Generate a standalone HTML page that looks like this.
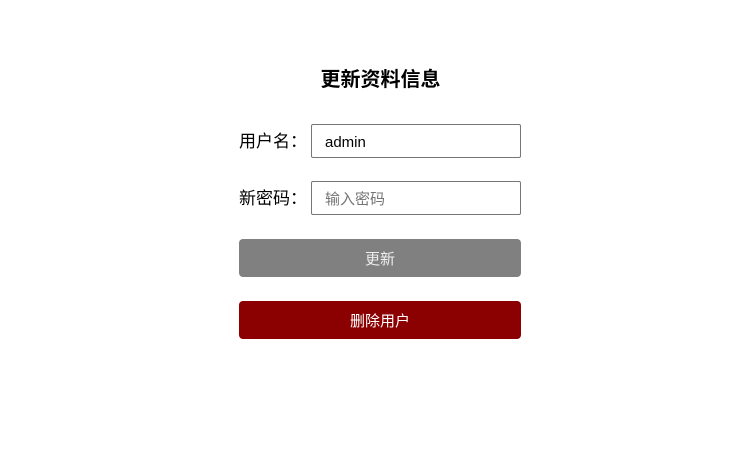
<!DOCTYPE html>
<html><head><meta charset="utf-8"><style>
body{margin:0;width:729px;height:471px;background:#fff;font-family:"Liberation Sans","Noto Sans CJK SC",sans-serif;position:relative}
.t{position:absolute;top:63px;left:0;width:761px;text-align:center;font-size:20px;font-weight:bold;color:#000}
.l{position:absolute;left:239px;font-size:17px;color:#000}
.i{position:absolute;left:311px;border:1px solid #767676;border-radius:2px;font-size:15px;line-height:36px;padding-left:13px;box-sizing:border-box;width:210px;height:34px}
.b{position:absolute;left:239px;width:282px;height:38px;border-radius:4px;color:#fff;font-size:15px;text-align:center;line-height:42px}
</style></head><body>
<div class="t">更新资料信息</div>
<div class="l" style="top:127px">用户名：</div>
<div class="i" style="top:124px;color:#000">admin</div>
<div class="l" style="top:184px">新密码：</div>
<div class="i" style="top:181px;color:#757575">输入密码</div>
<div class="b" style="top:239px;background:#808080;color:#eee">更新</div>
<div class="b" style="top:301px;background:#8b0000">删除用户</div>
</body></html>
